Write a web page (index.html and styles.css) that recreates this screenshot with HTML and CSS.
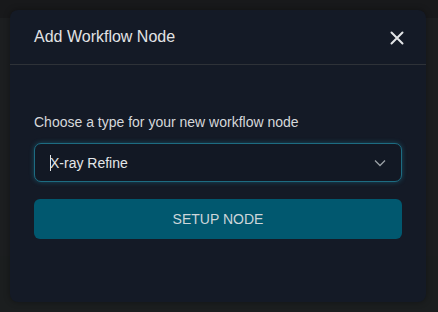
FILE: index.html
```html
<!DOCTYPE html>
<html>
<head>
<meta charset="utf-8">
<link rel="stylesheet" href="styles.css">
</head>
<body>
<div class="backdrop">
  <div class="band-top"></div>
  <div class="band-mid"></div>
  <div class="band-bottom"></div>
</div>
<div class="modal">
  <div class="header">
    <div class="title">Add Workflow Node</div>
    <svg class="close" width="14" height="14" viewBox="0 0 14 14"><path d="M1.5 1.5 L12.5 12.5 M12.5 1.5 L1.5 12.5" stroke="#e2e4e6" stroke-width="2" stroke-linecap="round" fill="none"/></svg>
  </div>
  <div class="body">
    <div class="label">Choose a type for your new workflow node</div>
    <div class="select">
      <span class="value"><span class="caret"></span>X-ray Refine</span>
      <svg class="chevron" width="12" height="8" viewBox="0 0 12 8"><path d="M1 1.5 L6 6.5 L11 1.5" stroke="#9aa0a6" stroke-width="1.3" fill="none"/></svg>
    </div>
    <div class="button">SETUP NODE</div>
  </div>
</div>
</body>
</html>
```
FILE: styles.css
```css
html, body {
  margin: 0;
  padding: 0;
  width: 438px;
  height: 312px;
  overflow: hidden;
  background: #18191b;
  font-family: "Liberation Sans", Arial, sans-serif;
}
.backdrop {
  display: flex;
  flex-direction: column;
  height: 312px;
}
.band-top {
  height: 18px;
  background: #18191b;
}
.band-mid {
  height: 238px;
  background: #1c1e20;
}
.band-bottom {
  flex: 1;
  background: #1b1e1f;
}
.modal {
  position: absolute;
  left: 10px;
  top: 10px;
  width: 416px;
  height: 292px;
  background: #141a26;
  border-radius: 8px;
  box-shadow: 0 0 6px rgba(0,0,0,0.35);
  display: flex;
  flex-direction: column;
}
.header {
  border-bottom: 1px solid #2e3238;
  display: flex;
  align-items: center;
  justify-content: space-between;
  padding: 0 22px 0 24px;
  box-sizing: border-box;
  height: 55px;
}
.title {
  color: #e2e3e5;
  font-size: 16px;
  margin-top: -1px;
}
.close {
  margin-top: 1px;
}
.body {
  padding: 47px 24px 0 24px;
  display: flex;
  flex-direction: column;
}
.label {
  color: #d6d8db;
  font-size: 14px;
  line-height: 20px;
}
.select {
  margin-top: 11px;
  height: 39px;
  box-sizing: border-box;
  border: 1px solid #1d6c82;
  border-radius: 7px;
  box-shadow: 0 0 5px rgba(30, 140, 170, 0.45);
  background: #121824;
  display: flex;
  align-items: center;
  justify-content: space-between;
  padding: 0 15px 0 15px;
}
.value {
  color: #e4e6e8;
  font-size: 14px;
  display: flex;
  align-items: center;
}
.caret {
  display: inline-block;
  width: 1px;
  height: 16px;
  background: #e4e6e8;
  margin-right: -1px;
}
.chevron {
  margin-top: 1px;
}
.button {
  margin-top: 17px;
  height: 40px;
  border-radius: 6px;
  background: #01586f;
  color: #cdd6da;
  font-size: 14px;
  display: flex;
  align-items: center;
  justify-content: center;
}
```
